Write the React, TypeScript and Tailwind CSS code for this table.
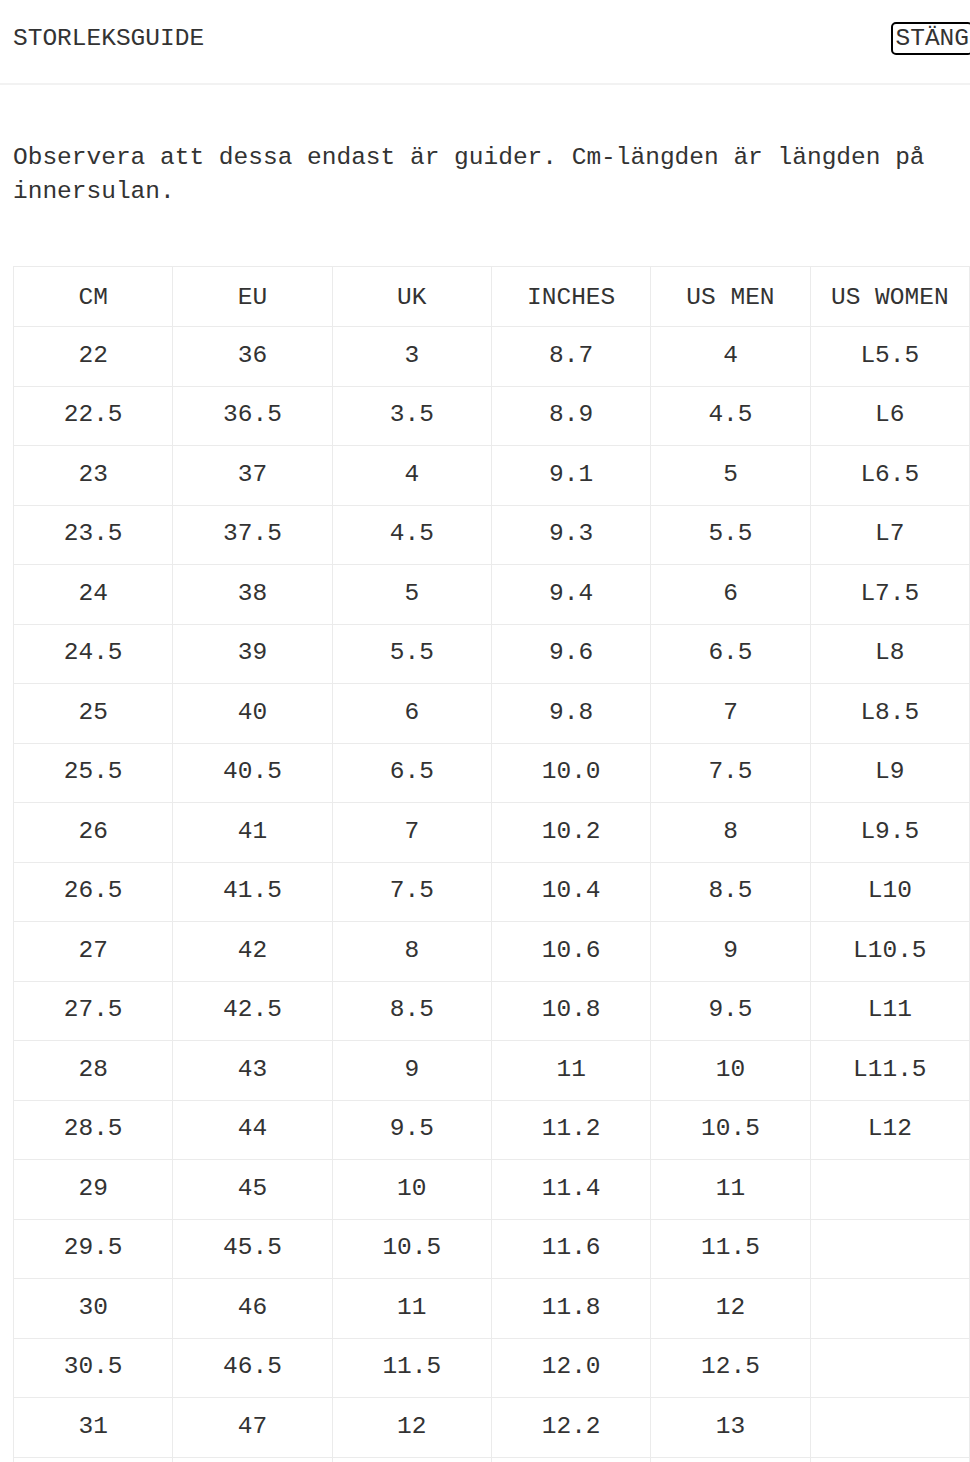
const rows: string[][] = [
  ["22", "36", "3", "8.7", "4", "L5.5"],
  ["22.5", "36.5", "3.5", "8.9", "4.5", "L6"],
  ["23", "37", "4", "9.1", "5", "L6.5"],
  ["23.5", "37.5", "4.5", "9.3", "5.5", "L7"],
  ["24", "38", "5", "9.4", "6", "L7.5"],
  ["24.5", "39", "5.5", "9.6", "6.5", "L8"],
  ["25", "40", "6", "9.8", "7", "L8.5"],
  ["25.5", "40.5", "6.5", "10.0", "7.5", "L9"],
  ["26", "41", "7", "10.2", "8", "L9.5"],
  ["26.5", "41.5", "7.5", "10.4", "8.5", "L10"],
  ["27", "42", "8", "10.6", "9", "L10.5"],
  ["27.5", "42.5", "8.5", "10.8", "9.5", "L11"],
  ["28", "43", "9", "11", "10", "L11.5"],
  ["28.5", "44", "9.5", "11.2", "10.5", "L12"],
  ["29", "45", "10", "11.4", "11", ""],
  ["29.5", "45.5", "10.5", "11.6", "11.5", ""],
  ["30", "46", "11", "11.8", "12", ""],
  ["30.5", "46.5", "11.5", "12.0", "12.5", ""],
  ["31", "47", "12", "12.2", "13", ""],
  ["31.5", "47.5", "12.5", "12.4", "13.5", ""],
];

const heads = ["CM", "EU", "UK", "INCHES", "US MEN", "US WOMEN"];

export default function App() {
  return (
    <div className="min-h-screen bg-white text-[#333] font-['Liberation_Mono',monospace] text-[24.5px] overflow-hidden">
      {/* Header */}
      <header className="h-[85px] border-b-2 border-[#f2f2f2] flex items-start justify-between pl-[13px] pt-[22px]">
        <h2 className="mt-[2px] leading-[30px]">STORLEKSGUIDE</h2>
        <button className="-mr-[3px] h-[33px] px-[2px] border-2 border-black rounded-[5px] leading-[28px] text-[#333]">
          STÄNG
        </button>
      </header>

      <p className="px-[13px] mt-[56px] leading-[34px]">
        Observera att dessa endast är guider. Cm-längden är längden på innersulan.
      </p>

      <table className="ml-[13px] mt-[57px] w-[957px] table-fixed border-collapse">
        <thead>
          <tr className="h-[60px]">
            {heads.map((h) => (
              <th key={h} className="border border-[#ebebeb] font-normal text-center pt-[3px]">
                {h}
              </th>
            ))}
          </tr>
        </thead>
        <tbody>
          {rows.map((r, i) => (
            <tr key={i} className="h-[59.5px]">
              {r.map((c, j) => (
                <td key={j} className="border border-[#ebebeb] text-center">
                  {c}
                </td>
              ))}
            </tr>
          ))}
        </tbody>
      </table>
    </div>
  );
}
